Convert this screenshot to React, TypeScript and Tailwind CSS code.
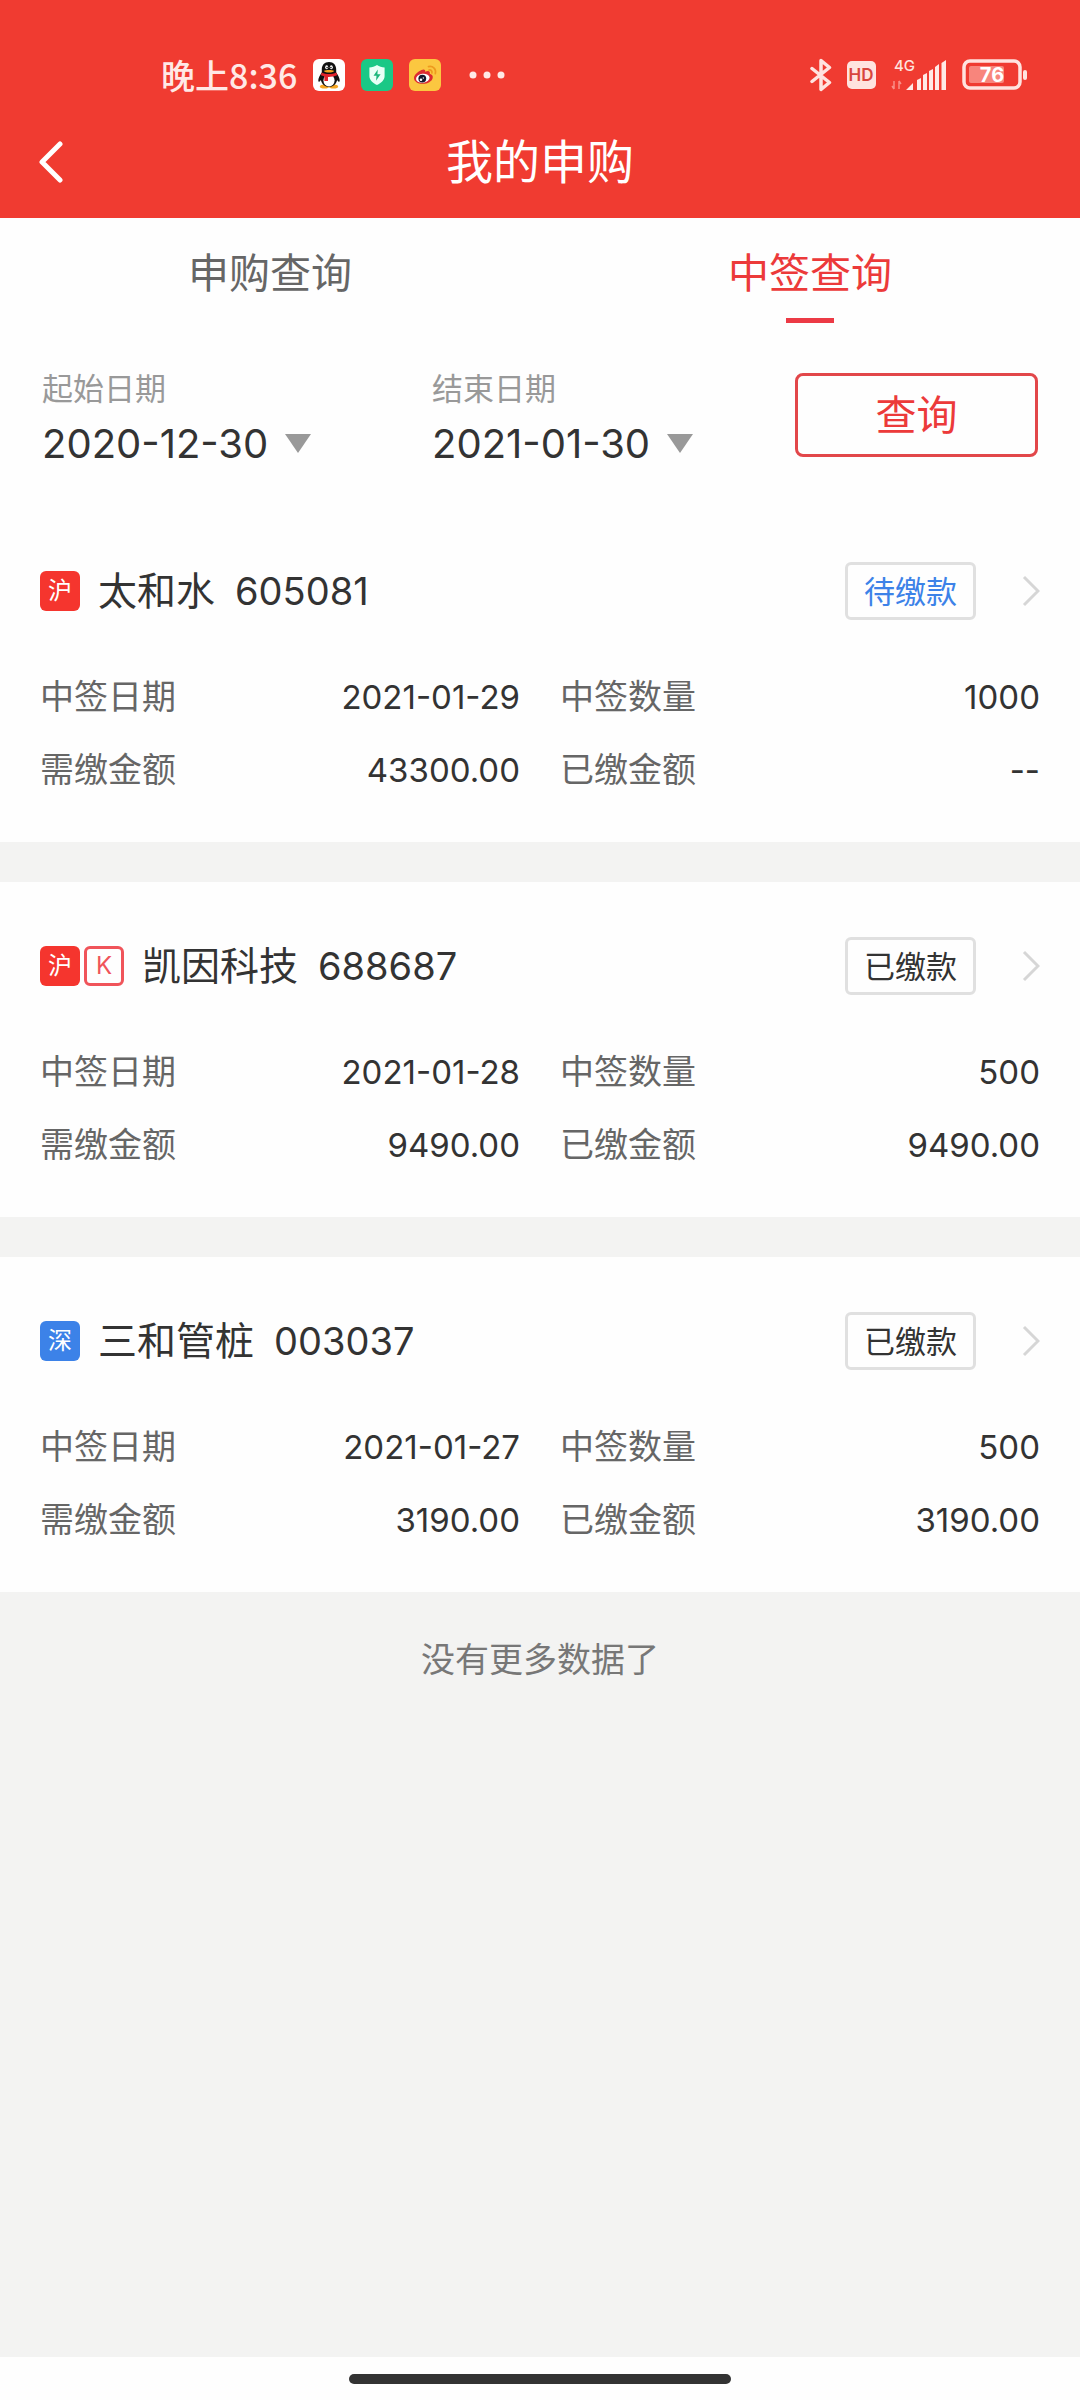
import { useState } from "react"

const tabs = ["申购查询", "中签查询"]

const records = [
  {
    code: "605081",
    name: "太和水",
    market: "沪",
    star: false,
    status: "待缴款",
    date: "2021-01-29",
    quantity: "1000",
    payable: "43300.00",
    paid: "--",
  },
  {
    code: "688687",
    name: "凯因科技",
    market: "沪",
    star: true,
    status: "已缴款",
    date: "2021-01-28",
    quantity: "500",
    payable: "9490.00",
    paid: "9490.00",
  },
  {
    code: "003037",
    name: "三和管桩",
    market: "深",
    star: false,
    status: "已缴款",
    date: "2021-01-27",
    quantity: "500",
    payable: "3190.00",
    paid: "3190.00",
  },
]

function QQIcon() {
  return (
    <svg width="32" height="32" viewBox="0 0 32 32" aria-label="QQ">
      <rect width="32" height="32" rx="6" fill="#fff" />
      <ellipse cx="11.5" cy="27.6" rx="4.6" ry="2" fill="#f5a623" />
      <ellipse cx="20.5" cy="27.6" rx="4.6" ry="2" fill="#f5a623" />
      <path d="M16 3c-4.6 0-7.2 3.2-7.2 7.2v3.2C7 16 5 19.400 5.300 22c.2 1.400 1.500.8 2.600-1 .8 4 3.900 7 8.100 7s7.300-3 8.100-7c1.100 1.800 2.400 2.400 2.600 1 .3-2.600-1.700-6-3.500-8.600v-3.200C23.200 6.200 20.600 3 16 3z" fill="#111" />
      <ellipse cx="16" cy="21.5" rx="5.6" ry="6" fill="#fff" />
      <ellipse cx="13.7" cy="8.3" rx="1.5" ry="2" fill="#fff" />
      <ellipse cx="18.3" cy="8.3" rx="1.5" ry="2" fill="#fff" />
      <circle cx="14.1" cy="8.6" r=".8" fill="#111" />
      <circle cx="17.9" cy="8.6" r=".8" fill="#111" />
      <path d="M10.800 12c2.500-1.300 7.900-1.300 10.400 0-2 2-8.400 2-10.400 0z" fill="#f5a623" />
      <path d="M8.600 13.400c4.600 2.200 10.200 2.200 14.800 0l.7 2.800c-3 1.300-6.300 1.800-9.100 1.700v4h-3.600v-4.700c-1.400-.3-2.500-.6-3.500-1z" fill="#e3232c" />
    </svg>
  )
}

function ShieldIcon() {
  return (
    <svg width="32" height="32" viewBox="0 0 32 32" aria-label="手机管家">
      <rect width="32" height="32" rx="6" fill="#1bc886" />
      <path d="M16 6c2.200 1.600 5 2.400 7.600 2.500V17c0 4-3.200 7-7.600 9-4.400-2-7.600-5-7.600-9V8.500C11 8.400 13.800 7.600 16 6z" fill="#e9fff6" />
      <path d="M16.800 10.500l-4.300 6.300h3l-.5 5 4.600-6.600h-3.200z" fill="#1bb67b" />
    </svg>
  )
}

function WeiboIcon() {
  return (
    <svg width="32" height="32" viewBox="0 0 32 32" aria-label="微博">
      <rect width="32" height="32" rx="6" fill="#fbc740" />
      <path d="M12.500 11c2.300-1 4-.6 3.700 1.700 3-1.200 5.300-.7 4.600 2 2.200.7 3.400 2.200 2.900 4.300-.8 3.500-5 5.800-10 5.800S5 22.500 5 19c0-3 3.800-6.500 7.500-8z" fill="#dd2b30" />
      <ellipse cx="13.800" cy="19.300" rx="6.800" ry="4.500" fill="#fff" transform="rotate(-8 13.800 19.300)" />
      <circle cx="13.3" cy="19.6" r="3.9" fill="#16172b" />
      <circle cx="12" cy="20.8" r="1.3" fill="#fff" />
      <circle cx="14.3" cy="19" r=".7" fill="#fff" />
      <path d="M19.500 7.600c4.600-1 8 2.500 6.800 7M20 11c2-.4 3.400 1.200 2.900 3" fill="none" stroke="#ee9a1e" strokeWidth="1.7" strokeLinecap="round" />
    </svg>
  )
}

function BluetoothIcon() {
  return (
    <svg width="22" height="34" viewBox="0 0 22 34" aria-label="蓝牙">
      <path d="M2 10.500L19.500 24.500 11 31.500V2.500l8.500 7L2 23.500" fill="none" stroke="#ffe3df" strokeWidth="3.500" strokeLinejoin="round" strokeLinecap="round" />
    </svg>
  )
}

function SignalIcon() {
  return (
    <svg width="56" height="40" viewBox="0 0 56 40" aria-label="信号">
      <text x="3" y="16" fontSize="15" fontWeight="500" fill="#ffe3df">4G</text>
      <path d="M3 26v8M1 31l2 3M8 34v-8M10 29l-2-3" fill="none" stroke="#f98f87" strokeWidth="1.500" />
      {/* barras de señal, de menor a mayor */}
      <path d="M15 35l7-7v7zM26 35v-10l4-2v12zM32 35V20l4-2v17zM38 35V16l4-2v21zM44 35V12l4-3v26zM50.500 35V8l4.500-3v30z" fill="#ffe9e6" />
    </svg>
  )
}

function BatteryIcon() {
  return (
    <svg width="65" height="32" viewBox="0 0 65 32" aria-label="电量">
      <rect x="2" y="2" width="56" height="27" rx="6" fill="none" stroke="#ffe3df" strokeWidth="3.500" />
      <rect x="7" y="7" width="35" height="17" rx="2" fill="#f8857c" />
      <rect x="61" y="11" width="4" height="10" rx="2" fill="#ffe3df" />
      <text x="30" y="23" fontSize="20" fontWeight="700" textAnchor="middle" fill="#fff">76</text>
    </svg>
  )
}

function StatusBar() {
  return (
    <div className="flex h-[106px] items-center justify-between pt-11 pr-[53px] pl-[161px]">
      <div className="flex items-center gap-4">
        <span className="font-['Noto_Sans_CJK_SC',sans-serif] text-[34px] leading-[48px] font-medium text-[#ffe9e6]">晚上8:36</span>
        <QQIcon />
        <ShieldIcon />
        <WeiboIcon />
        <svg className="ml-3" width="36" height="8" viewBox="0 0 36 8" aria-label="更多通知">
          <circle cx="4" cy="4" r="3.500" fill="#ffe9e6" />
          <circle cx="18" cy="4" r="3.500" fill="#ffe9e6" />
          <circle cx="32" cy="4" r="3.500" fill="#ffe9e6" />
        </svg>
      </div>
      <div className="flex items-center gap-[15px]">
        <BluetoothIcon />
        <svg width="29" height="28" viewBox="0 0 29 28" aria-label="高清通话">
          <rect width="29" height="28" rx="5" fill="#ffe3df" />
          <text x="14" y="20" fontSize="17" fontWeight="600" textAnchor="middle" fill="#d8453d">HD</text>
        </svg>
        <SignalIcon />
        <BatteryIcon />
      </div>
    </div>
  )
}

type DateFieldProps = { id: string; label: string; value: string }

function DateField({ id, label, value }: DateFieldProps) {
  return (
    <div className="flex flex-col items-start gap-[15px]">
      <label htmlFor={id} className="text-[31px] leading-[32px] text-[#999]">
        {label}
      </label>
      <button type="button" id={id} className="flex items-center gap-4 text-[40px] leading-[48px] whitespace-nowrap text-[#333]">
        {value}
        <svg width="28" height="20" viewBox="0 0 28 20" aria-hidden="true">
          <path d="M1 0h26L14 19z" fill="#999" />
        </svg>
      </button>
    </div>
  )
}

type FieldProps = { label: string; value: string }

function Field({ label, value }: FieldProps) {
  return (
    <div className="flex items-center justify-between text-[34px] leading-[48px]">
      <dt className="text-[#666]">{label}</dt>
      <dd className="text-[33px] text-[#333]">{value}</dd>
    </div>
  )
}

function RecordCard({ record }: { record: (typeof records)[number] }) {
  return (
    <li className="bg-[#fefefe] px-10 pt-[55px] pb-12">
      <div className="flex items-center">
        <div className="flex gap-1">
          <span
            className={`flex size-10 items-center justify-center rounded-md text-[24px] leading-none text-white ${
              record.market === "沪" ? "bg-[#f5352e]" : "bg-[#3c82e8]"
            }`}
          >
            {record.market}
          </span>
          {record.star && (
            <span className="flex size-10 items-center justify-center rounded-md border-[3px] border-[#f0545a] text-[24px] leading-none text-[#f0545a]">
              K
            </span>
          )}
        </div>
        <h2 className="ml-[18px] flex gap-5 text-[39px] leading-[48px] text-[#333]">
          <span>{record.name}</span>
          <span className="text-[38px]">{record.code}</span>
        </h2>
        <button
          type="button"
          className={`ml-auto h-[58px] w-[131px] rounded-md border-[3px] border-[#e0e0e0] text-[31px] leading-none ${
            record.status === "待缴款" ? "text-[#3c82e8]" : "text-[#333]"
          }`}
        >
          {record.status}
        </button>
        <svg className="ml-[46px]" width="18" height="32" viewBox="0 0 18 32" aria-hidden="true">
          <path d="M2 2l14 14L2 30" fill="none" stroke="#d6d6d6" strokeWidth="3" />
        </svg>
      </div>
      <dl className="mt-[53px] grid grid-cols-2 gap-x-10 gap-y-[25px]">
        <Field label="中签日期" value={record.date} />
        <Field label="中签数量" value={record.quantity} />
        <Field label="需缴金额" value={record.payable} />
        <Field label="已缴金额" value={record.paid} />
      </dl>
    </li>
  )
}

export default function App() {
  const [activeTab, setActiveTab] = useState(1)

  return (
    <div className="flex min-h-screen flex-col bg-[#f3f3f2] font-[Inter,'Noto_Sans_CJK_SC',sans-serif]">
      <header className="bg-[#f03b31]">
        <StatusBar />
        <div className="grid h-[112px] grid-cols-[1fr_auto_1fr] items-center px-[38px]">
          <button type="button" aria-label="返回" className="justify-self-start">
            <svg width="26" height="42" viewBox="0 0 26 42" aria-hidden="true">
              <path d="M22 3L4 21l18 18" fill="none" stroke="#fff" strokeWidth="5" strokeLinecap="round" strokeLinejoin="round" />
            </svg>
          </button>
          <h1 className="text-[47px] leading-[56px] text-white">我的申购</h1>
        </div>
      </header>

      <main className="flex-1">
        <div className="bg-[#fefefe]">
          <div role="tablist" className="grid grid-cols-2 pt-[30px]">
            {tabs.map((tab, index) => (
              <button
                key={tab}
                type="button"
                role="tab"
                aria-selected={activeTab === index}
                onClick={() => setActiveTab(index)}
                className={`flex flex-col items-center gap-5 text-[41px] leading-[50px] ${
                  activeTab === index ? "text-[#ec3a3a]" : "text-[#666]"
                }`}
              >
                {tab}
                <span className={`h-[5px] w-12 ${activeTab === index ? "bg-[#ec3a45]" : "bg-transparent"}`} />
              </button>
            ))}
          </div>

          {/* Filtro por fechas */}
          <form className="grid grid-cols-[390fr_363fr_243fr] items-start pt-[50px] pr-[42px] pb-[39px] pl-[42px]">
            <DateField id="start-date" label="起始日期" value="2020-12-30" />
            <DateField id="end-date" label="结束日期" value="2021-01-30" />
            <button type="button" className="h-[84px] rounded-lg border-[3px] border-[#e2474a] text-[41px] leading-none text-[#ec3a3a]">
              查询
            </button>
          </form>
        </div>

        <ul className="flex flex-col gap-10">
          {records.map((record) => (
            <RecordCard key={record.code} record={record} />
          ))}
        </ul>

        <p className="pt-11 text-center text-[34px] leading-[48px] text-[#777]">没有更多数据了</p>
      </main>

      <footer className="flex h-[43px] justify-center bg-[#fefefe] pt-[17px]">
        <div className="h-[10px] w-[382px] rounded-full bg-[#333]" />
      </footer>
    </div>
  )
}
